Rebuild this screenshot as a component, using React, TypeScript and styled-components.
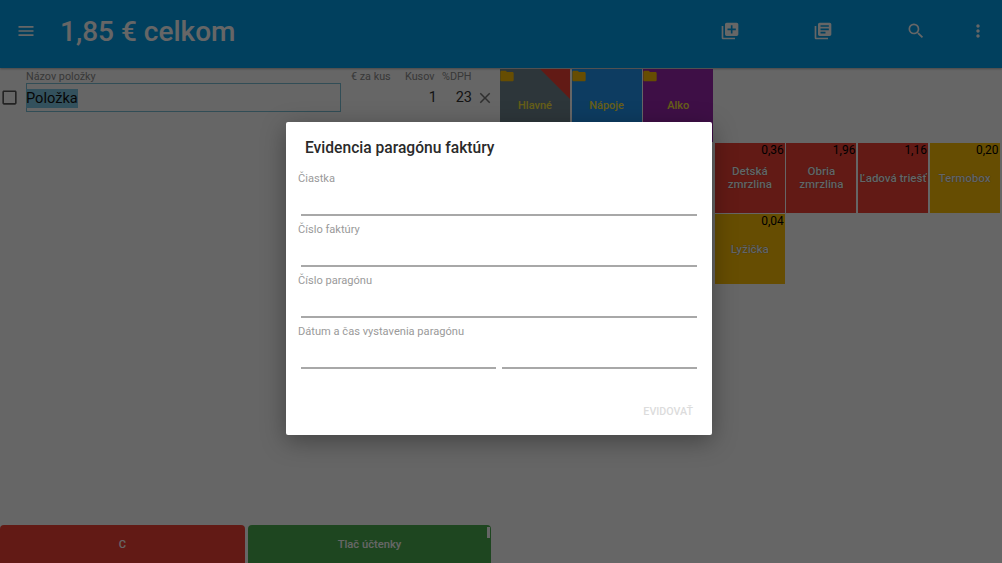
import styled, { createGlobalStyle } from "styled-components";
import {
  MdMenu,
  MdLibraryAdd,
  MdLibraryBooks,
  MdSearch,
  MdMoreVert,
  MdFolder,
  MdCheckBoxOutlineBlank,
  MdClose,
} from "react-icons/md";

const GlobalStyle = createGlobalStyle`
  html, body {
    margin: 0;
    padding: 0;
    background: #fff;
    font-family: Roboto, "Noto Sans", sans-serif;
    overflow: hidden;
  }
`;

const categories = [
  { name: "Hlavné", color: "#708892", corner: true },
  { name: "Nápoje", color: "#2196f3", corner: false },
  { name: "Alko", color: "#9c27b0", corner: false },
];

const products = [
  { name: "Detská zmrzlina", price: "0,36", color: "#f44336", column: 4, row: 2 },
  { name: "Obria zmrzlina", price: "1,96", color: "#f44336", column: 5, row: 2 },
  { name: "Ľadová triešť", price: "1,16", color: "#f44336", column: 6, row: 2 },
  { name: "Termobox", price: "0,20", color: "#ffc107", column: 7, row: 2 },
  { name: "Lyžička", price: "0,04", color: "#ffc107", column: 4, row: 3 },
];

const App = () => {
  return (
    <Page>
      <GlobalStyle />
      <Header>
        <MenuButton>
          <MdMenu size={20} />
        </MenuButton>
        <Title>1,85 € celkom</Title>
        <Actions>
          <ActionIcon $width={93}>
            <MdLibraryAdd size={20} />
          </ActionIcon>
          <ActionIcon $width={93}>
            <MdLibraryBooks size={20} />
          </ActionIcon>
          <ActionIcon $width={93}>
            <MdSearch size={20} />
          </ActionIcon>
          <ActionIcon $width={31}>
            <MdMoreVert size={20} />
          </ActionIcon>
        </Actions>
      </Header>

      <Main>
        <LeftColumn>
          <ItemGrid>
            <span />
            <ColumnLabel>Názov položky</ColumnLabel>
            <ColumnLabel>€ za kus</ColumnLabel>
            <ColumnLabel>Kusov</ColumnLabel>
            <ColumnLabel>%DPH</ColumnLabel>
            <span />

            <CheckCell>
              <MdCheckBoxOutlineBlank size={19} />
            </CheckCell>
            <NameInput>
              <Selected>Položka</Selected>
            </NameInput>
            <span />
            <NumberCell $pad={5}>1</NumberCell>
            <NumberCell $pad={0}>23</NumberCell>
            <CloseCell>
              <MdClose size={18} />
            </CloseCell>
          </ItemGrid>
          <BottomBar>
            <BarButton $color="#f44336" $width={245}>
              C
            </BarButton>
            <BarButton $color="#4caf50" $width={243}>
              Tlač účtenky
              <ScrollMark />
            </BarButton>
          </BottomBar>
        </LeftColumn>

        <TileGrid>
          {categories.map((c) => (
            <Tile key={c.name} $color={c.color}>
              <FolderMark>
                <MdFolder size={16} />
              </FolderMark>
              {c.corner && <Corner />}
              <CategoryName>{c.name}</CategoryName>
            </Tile>
          ))}
          {products.map((p) => (
            <Tile key={p.name} $color={p.color} $column={p.column} $row={p.row}>
              <Price>{p.price}</Price>
              <ProductName>{p.name}</ProductName>
            </Tile>
          ))}
        </TileGrid>
      </Main>

      <Scrim />
      <Dialog>
        <DialogTitle>Evidencia paragónu faktúry</DialogTitle>
        <Field>
          <FieldLabel>Čiastka</FieldLabel>
          <Underline />
        </Field>
        <Field>
          <FieldLabel>Číslo faktúry</FieldLabel>
          <Underline />
        </Field>
        <Field>
          <FieldLabel>Číslo paragónu</FieldLabel>
          <Underline />
        </Field>
        <Field>
          <FieldLabel>Dátum a čas vystavenia paragónu</FieldLabel>
          <DateRow>
            <Underline />
            <Underline />
          </DateRow>
        </Field>
        <DialogActions>
          <SubmitButton>EVIDOVAŤ</SubmitButton>
        </DialogActions>
      </Dialog>
    </Page>
  );
};

const Page = styled.div`
  position: relative;
  width: 1002px;
  height: 563px;
  display: flex;
  flex-direction: column;
  overflow: hidden;
  background: #fff;
`;

const Header = styled.header`
  height: 68px;
  flex-shrink: 0;
  display: flex;
  align-items: center;
  background: #03a0ec;
  color: #fff;
  padding-bottom: 6px;
  box-sizing: border-box;
  box-shadow: 0 1px 2px rgba(0, 0, 0, 0.3);
`;

const MenuButton = styled.div`
  width: 60px;
  padding-left: 16px;
  box-sizing: border-box;
  display: flex;
  align-items: center;
`;

const Title = styled.div`
  font-size: 28px;
  font-weight: 500;
  line-height: 36px;
  margin-top: 2px;
`;

const Actions = styled.div`
  margin-left: auto;
  display: flex;
  padding-right: 9px;
`;

const ActionIcon = styled.div<{ $width: number }>`
  width: ${(p) => p.$width}px;
  display: flex;
  justify-content: center;
`;

const Main = styled.main`
  flex: 1;
  display: flex;
  min-height: 0;
`;

const LeftColumn = styled.div`
  width: 500px;
  flex-shrink: 0;
  display: flex;
  flex-direction: column;
  justify-content: space-between;
`;

const ItemGrid = styled.div`
  display: grid;
  grid-template-columns: 26px 325px 54px 37px 30px 28px;
  grid-template-rows: 15px 29px;
  color: #000;
`;

const ColumnLabel = styled.div`
  font-size: 10.8px;
  line-height: 17px;
  color: #8c8c8c;
`;

const CheckCell = styled.div`
  display: flex;
  align-items: center;
  color: #555;
`;

const NameInput = styled.div`
  width: 315px;
  box-sizing: border-box;
  border: 1px solid #7ac0d8;
  display: flex;
  align-items: center;
  padding-top: 1px;
`;

const Selected = styled.span`
  margin-left: -1px;
  font-size: 14.6px;
  line-height: 19px;
  background: #80cbe8;
  color: #111;
`;

const NumberCell = styled.div<{ $pad: number }>`
  font-size: 14.5px;
  display: flex;
  align-items: center;
  justify-content: flex-end;
  padding-right: ${(p) => p.$pad}px;
  color: #333;
`;

const CloseCell = styled.div`
  display: flex;
  align-items: center;
  padding-left: 4px;
  color: #777;
`;

const BottomBar = styled.div`
  display: flex;
  gap: 3px;
`;

const BarButton = styled.div<{ $color: string; $width: number }>`
  position: relative;
  width: ${(p) => p.$width}px;
  height: 38px;
  border-radius: 4px 4px 0 0;
  background: ${(p) => p.$color};
  color: #fff;
  font-size: 11.2px;
  font-weight: 500;
  display: flex;
  align-items: center;
  justify-content: center;
`;

const ScrollMark = styled.span`
  position: absolute;
  top: 2px;
  right: 1px;
  width: 3px;
  height: 11px;
  background: #fff;
`;

const TileGrid = styled.div`
  display: grid;
  grid-template-columns: repeat(7, 70px);
  grid-template-rows: 73px 70px 70px;
  column-gap: 1.6px;
  row-gap: 1px;
  padding-top: 1px;
  align-content: start;
`;

const Tile = styled.div<{ $color: string; $column?: number; $row?: number }>`
  position: relative;
  background: ${(p) => p.$color};
  grid-column-start: ${(p) => p.$column ?? "auto"};
  grid-row-start: ${(p) => p.$row ?? "auto"};
  display: flex;
  align-items: center;
  justify-content: center;
  overflow: hidden;
  text-align: center;
`;

const FolderMark = styled.span`
  position: absolute;
  top: -1px;
  left: -1px;
  display: flex;
  color: #ffc107;
`;

const Corner = styled.span`
  position: absolute;
  top: 0;
  right: 0;
  width: 0;
  height: 0;
  border-top: 30px solid #f44336;
  border-left: 30px solid transparent;
`;

const CategoryName = styled.span`
  font-size: 11px;
  font-weight: 500;
  color: #ffeb3b;
`;

const ProductName = styled.span`
  font-size: 11.5px;
  line-height: 13px;
  font-weight: 500;
  color: #fff;
  text-shadow: 0 0 1px rgba(0, 0, 0, 0.6);
`;

const Price = styled.span`
  position: absolute;
  top: 0;
  right: 1px;
  font-size: 12px;
  line-height: 14px;
  color: #000;
`;

const Scrim = styled.div`
  position: absolute;
  inset: 0;
  background: rgba(0, 0, 0, 0.6);
`;

const Dialog = styled.section`
  position: absolute;
  left: 286px;
  top: 122px;
  width: 426px;
  height: 313px;
  box-sizing: border-box;
  padding: 14px 15px 0 12px;
  background: #fff;
  border-radius: 2px;
  box-shadow: 0 6px 24px rgba(0, 0, 0, 0.35);
`;

const DialogTitle = styled.h2`
  margin: 0 0 12px 7px;
  font-size: 15.6px;
  line-height: 24px;
  font-weight: 500;
  color: #2a2a2a;
`;

const Field = styled.div`
  height: 51px;
`;

const FieldLabel = styled.div`
  font-size: 11.1px;
  line-height: 14px;
  color: #9a9a9a;
`;

const Underline = styled.div`
  flex: 1;
  height: 30px;
  margin-left: 3px;
  border-bottom: 2px solid #a8a8a8;
  box-sizing: border-box;
`;

const DateRow = styled.div`
  display: flex;
  gap: 3px;
`;

const DialogActions = styled.div`
  display: flex;
  justify-content: flex-end;
  margin-top: 29px;
  padding-right: 4px;
`;

const SubmitButton = styled.div`
  font-size: 10.7px;
  line-height: 14px;
  font-weight: 500;
  color: #dcdcdc;
`;

export default App;
